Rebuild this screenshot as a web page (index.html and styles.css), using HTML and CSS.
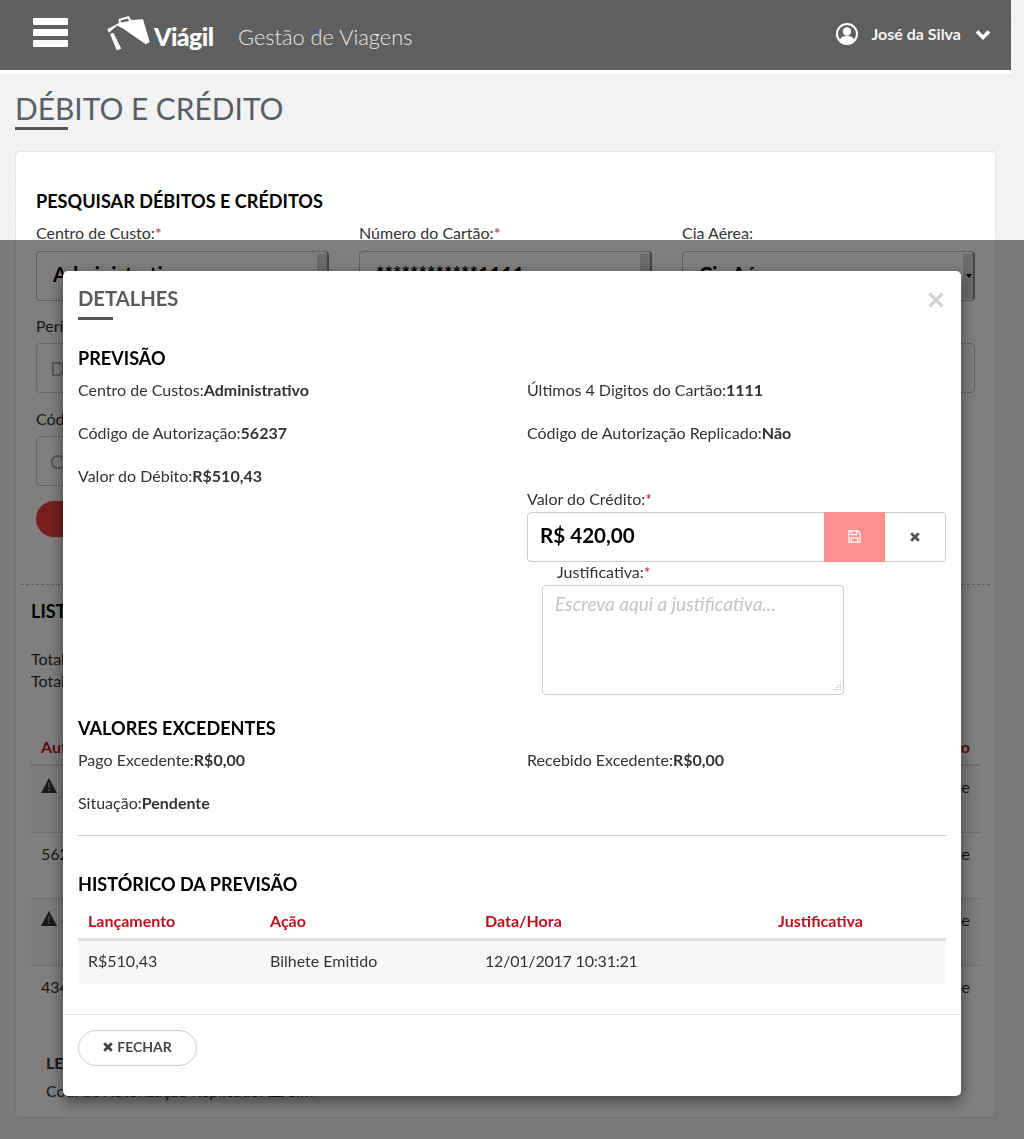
FILE: index.html
```html
<!DOCTYPE html>
<html lang="pt-BR">
<head>
<meta charset="utf-8">
<title>Débito e Crédito</title>
<link rel="stylesheet" href="styles.css">
</head>
<body>
<header class="topbar">
  <div class="burger"><span></span><span></span><span></span></div>
  <div class="logo">
    <svg class="logo-mark" viewBox="0 0 44 36" width="44" height="36"><path fill="#fff" fill-rule="evenodd" d="M.3 13.300 12 7 11.500 3 22 0 24 4 36 3.300 42.700 26 38.700 28.300 16.300 12.700 10 9.500 2 16.700ZM13.500 4.500 14 6.500 22 5 21 2.500Z"/><path fill="#fff" d="M3 18 6.300 16.700 14.300 32.700 9.700 34.300Z"/></svg>
    <span class="logo-word">Viágil</span>
  </div>
  <span class="app-name">Gestão de Viagens</span>
  <div class="user">
    <svg class="user-icon" viewBox="0 0 22 22" width="22" height="22"><circle cx="11" cy="11" r="10" fill="none" stroke="#fff" stroke-width="2"/><circle cx="11" cy="8.500" r="4.200" fill="#fff"/><path fill="#fff" d="M3.500 17.500C5 13.500 8 13 11 13s6 .5 7.500 4.500C16.500 20 14 21 11 21s-5.500-1-7.500-3.500Z"/></svg>
    <span class="user-name">José da Silva</span>
    <svg class="chev" viewBox="0 0 16 11" width="16" height="11"><path fill="none" stroke="#fff" stroke-width="3.600" d="M2 2.500 8 8.500 14 2.500"/></svg>
  </div>
</header>

<main class="page">
  <h1 class="page-title">DÉBITO E CRÉDITO</h1>
  <section class="card">
    <h2 class="sec search-title">PESQUISAR DÉBITOS E CRÉDITOS</h2>
    <div class="form-row">
      <div class="field"><label>Centro de Custo:<em>*</em></label><div class="fake-select"><b>Administrativo</b><i class="bar"></i></div></div>
      <div class="field"><label>Número do Cartão:<em>*</em></label><div class="fake-select"><b>************1111</b><i class="bar"></i></div></div>
      <div class="field"><label>Cia Aérea:</label><div class="fake-select"><b>Cia Aérea</b><i class="bar caret"></i></div></div>
    </div>
    <div class="period">
      <label>Período:</label>
      <div class="fake-input">Data</div>
    </div>
    <div class="code">
      <label>Código de Autorização:</label>
      <div class="fake-input short">Código</div>
    </div>
    <button class="search-btn" type="button">Pesquisar</button>
    <div class="dash"></div>
    <h2 class="sec list-title">LISTA DE PREVISÕES</h2>
    <p class="total first">Total de Débitos: R$0,00</p>
    <p class="total">Total de Créditos: R$0,00</p>
    <div class="list">
      <div class="list-head"><span>Autorização</span><span>Situação</span></div>
      <div class="list-row odd"><svg class="warn" viewBox="0 0 16 15" width="16" height="15"><path fill="#333" d="M8 0 16 15H0Z"/><path fill="#808080" d="M7 5h2v5H7ZM7 11h2v2H7Z"/></svg><span>Pendente</span></div>
      <div class="list-row"><span>56237</span><span>Pendente</span></div>
      <div class="list-row odd"><svg class="warn" viewBox="0 0 16 15" width="16" height="15"><path fill="#333" d="M8 0 16 15H0Z"/><path fill="#808080" d="M7 5h2v5H7ZM7 11h2v2H7Z"/></svg><span>Pendente</span></div>
      <div class="list-row"><span>43412</span><span>Pendente</span></div>
    </div>
    <div class="legend">
      <strong>LEGENDA</strong>
      <p>Cod. de Autorização Replicado: <i class="swatch"></i> Sim</p>
    </div>
  </section>
</main>

<div class="overlay">
  <div class="modal">
    <div class="modal-body">
      <div class="modal-head">
        <h3 class="modal-title">DETALHES</h3>
        <svg class="modal-close" viewBox="0 0 16 16" width="16" height="16"><path fill="none" stroke="#d2d2d2" stroke-width="3.400" d="M1.500 1.500 14.500 14.500M14.500 1.500 1.500 14.500"/></svg>
      </div>
      <h2 class="sec prev-title">PREVISÃO</h2>
      <div class="cols">
        <div class="col">
          <p class="data">Centro de Custos:<b>Administrativo</b></p>
          <p class="data">Código de Autorização:<b>56237</b></p>
          <p class="data">Valor do Débito:<b>R$510,43</b></p>
        </div>
        <div class="col">
          <p class="data">Últimos 4 Digitos do Cartão:<b>1111</b></p>
          <p class="data">Código de Autorização Replicado:<b>Não</b></p>
          <label class="credit-label">Valor do Crédito:<em>*</em></label>
          <div class="credit">
            <span class="credit-value">R$ 420,00</span>
            <span class="btn-save"><svg viewBox="0 0 14 14" width="13" height="13"><path fill="none" stroke="#fff" stroke-width="1.300" d="M1 1H10.500L13 3.500V13H1Z"/><path fill="none" stroke="#fff" stroke-width="1.300" d="M3.500 1V5H9.500V1M3.500 13V8.500H10.500V13"/></svg></span>
            <span class="btn-cancel"><svg class="x" viewBox="0 0 10 10" width="10" height="10"><path fill="none" stroke="#555" stroke-width="2.800" d="M1.200 1.200 8.800 8.800M8.800 1.200 1.200 8.800"/></svg></span>
          </div>
          <label class="just-label">Justificativa:<em>*</em></label>
          <div class="textarea">Escreva aqui a justificativa...<svg class="grip" viewBox="0 0 10 10" width="10" height="10"><path fill="#bbb" d="M8 0h1v1H8ZM6 2h1v1H6ZM8 2h1v1H8ZM4 4h1v1H4ZM6 4h1v1H6ZM8 4h1v1H8ZM2 6h1v1H2ZM4 6h1v1H4ZM6 6h1v1H6ZM8 6h1v1H8Z"/></svg></div>
        </div>
      </div>
      <h2 class="sec exc-title">VALORES EXCEDENTES</h2>
      <div class="cols">
        <div class="col">
          <p class="data">Pago Excedente:<b>R$0,00</b></p>
          <p class="data">Situação:<b>Pendente</b></p>
        </div>
        <div class="col">
          <p class="data">Recebido Excedente:<b>R$0,00</b></p>
        </div>
      </div>
      <hr class="rule">
      <h2 class="sec hist-title">HISTÓRICO DA PREVISÃO</h2>
      <div class="hist hist-head"><span>Lançamento</span><span>Ação</span><span>Data/Hora</span><span>Justificativa</span></div>
      <div class="hist hist-row"><span>R$510,43</span><span>Bilhete Emitido</span><span class="when">12/01/2017 10:31:21</span><span></span></div>
    </div>
    <div class="modal-foot">
      <button class="close-btn" type="button"><svg viewBox="0 0 10 10" width="10" height="10"><path fill="none" stroke="#444" stroke-width="2.800" d="M1.200 1.200 8.800 8.800M8.800 1.200 1.200 8.800"/></svg>FECHAR</button>
    </div>
  </div>
</div>
</body>
</html>
```
FILE: styles.css
```css
* { box-sizing: border-box; }
html, body { margin: 0; padding: 0; }
body {
  height: 1139px;
  overflow: hidden;
  font: 16px/20px Lato, "Liberation Sans", sans-serif;
  color: #333;
  background: repeating-linear-gradient(100deg, #f6f6f6 0 1px, #eeeeee 1px 2px);
}
p, h1, h2, h3 { margin: 0; }
em { font-style: normal; color: #c2102a; }

.topbar {
  width: 1011px;
  height: 74px;
  border-bottom: 4px solid #fff;
  background: #5f5f60;
  display: flex;
  align-items: flex-start;
  color: #fff;
}
.burger { width: 35px; margin: 18px 0 0 33px; display: flex; flex-direction: column; gap: 4px; }
.burger span { height: 7px; background: #fff; border-radius: 1px; }
.logo { display: flex; align-items: flex-start; margin-left: 39px; width: 131px; }
.logo-mark { margin-top: 16px; flex: none; }
.logo-word { font-size: 25px; line-height: 30px; font-weight: 900; margin: 21px 0 0 3px; letter-spacing: -0.6px; }
.app-name { font-size: 21.800px; line-height: 26px; font-weight: 300; color: #e6e6e6; margin: 24px 0 0; }
.user { margin-left: auto; display: flex; align-items: center; height: 22px; margin-top: 23px; padding-right: 20px; }
.user-name { font-size: 16px; font-weight: 700; margin: 0 14px 0 13px; color: #f4f4f4; }

.page { padding: 0 15px; }
.page-title {
  font-size: 29.900px; line-height: 38px; font-weight: 400; color: #5a5f66;
  padding: 15px 0 0; height: 55px; position: relative;
}
.page-title::after { content: ""; display: block; width: 53px; height: 3px; background: #555; margin: 0; }
.card {
  margin-top: 22px;
  width: 981px;
  height: 967px;
  background: #fff;
  border: 1px solid #e4e4e4;
  border-radius: 4px;
  padding: 0 20px;
}
.sec { font-size: 18.100px; line-height: 24px; font-weight: 700; color: #000; }
.search-title { padding-top: 37px; height: 70px; }
label { display: block; }
.form-row { display: grid; grid-template-columns: repeat(3, 293px); gap: 30px; margin-top: 1px; }
.form-row label { height: 21px; line-height: 20px; }
.fake-select {
  height: 50px; margin-top: 7px; border: 1px solid #bbb; border-radius: 4px;
  padding: 10px 16px; font-size: 20px; line-height: 24px; color: #000; position: relative; border-right: 2px solid #888;
}
.fake-select .bar { position: absolute; top: 2px; right: 0; width: 10px; height: 45px; background: #d6d6d6; }
.fake-select .caret::after {
  content: ""; position: absolute; left: 3px; top: 20px;
  border: 3px solid transparent; border-top: 4px solid #000; border-bottom: 0;
}
.period { margin-top: 15px; }
.period label, .code label { line-height: 20px; }
.fake-input { height: 50px; margin-top: 7px; border: 1px solid #ccc; border-radius: 4px; padding: 14px 13px; color: #aaa; font-size: 20px; width: 939px; }
.fake-input.short { width: 293px; }
.code { margin-top: 16px; }
.search-btn { display: block; margin-top: 15px; width: 130px; height: 36px; border: 0; border-radius: 18px; background: #f03c3c; color: #fff; font: 700 14px Lato, sans-serif; }
.dash { border-top: 1px dashed #bbb; margin: 47px -15px 0; }
.list-title { margin: 14px 0 0 -5px; }
.total { margin-left: -5px; line-height: 22px; }
.total.first { margin-top: 25px; }
.list { margin: 38px 0 0 -5px; width: 949px; }
.list-head { display: flex; justify-content: space-between; height: 36px; padding: 7px 10px 0; font-weight: 700; color: #c2102a; border-bottom: 2px solid #ddd; }
.list-row { display: flex; justify-content: space-between; align-items: flex-start; height: 66.500px; padding: 11px 10px; border-bottom: 1px solid #ddd; }
.list-row:last-child { border-bottom: 0; }
.list-row.odd { background: #f8f8f8; }
.warn { margin-top: 1px; }
.legend { margin: 21px 0 0 10px; }
.legend strong { display: block; }
.legend p { margin-top: 8px; }
.swatch { display: inline-block; width: 16px; height: 10px; background: #333; }

.overlay { position: fixed; top: 240px; left: 0; right: 0; bottom: 0; background: rgba(0, 0, 0, .5); }
.modal {
  margin: 31px 0 0 63px; width: 898px; height: 825px; background: #fff; border-radius: 5px;
  box-shadow: 0 5px 15px rgba(0, 0, 0, .5);
}
.modal-body { padding: 0 15px; height: 744px; border-bottom: 1px solid #e5e5e5; }
.modal-head { display: flex; justify-content: space-between; height: 49px; position: relative; padding-top: 14px; }
.modal-title { font-size: 20.200px; line-height: 26px; font-weight: 700; color: #5b5b5b; position: relative; }
.modal-title::after { content: ""; display: block; width: 35px; height: 3px; background: #555; margin-top: 6px; }
.modal-close { margin: 7px 2px 0 0; }
.prev-title { margin-top: 26px; }
.cols { display: grid; grid-template-columns: 449px 419px; }
.data { height: 43px; line-height: 20px; padding-top: 10px; }
.data b { font-weight: 700; }
.col { min-width: 0; }
.credit-label { margin-top: 33px; }
.credit { display: flex; margin-top: 3px; height: 50px; border: 1px solid #ccc; border-radius: 4px; }
.credit-value { flex: 1; font-size: 20.600px; line-height: 44px; font-weight: 700; color: #000; padding-left: 12px; }
.btn-save { width: 61px; margin: -1px 0; padding-bottom: 2px; background: #ff8f8f; display: flex; align-items: center; justify-content: center; }
.btn-cancel { width: 60px; display: flex; align-items: center; justify-content: center; }
.just-label { margin: 0 0 0 30px; }
.textarea {
  margin: 3px 0 0 15px; width: 302px; height: 110px; border: 1px solid #ccc; border-radius: 4px;
  padding: 6px 12px; font-size: 19px; line-height: 24px; font-style: italic; color: #c4c4c4; font-weight: 400; position: relative;
}
.grip { position: absolute; right: 1px; bottom: 1px; }
.exc-title { margin-top: 21px; }
.rule { margin: 9px 0 0; border: 0; border-top: 1px solid #ccc; height: 0; }
.hist-title { margin-top: 36px; }
.hist { display: grid; grid-template-columns: 182px 215px 293px 178px; padding-left: 10px; }
.hist-head { height: 38px; margin-top: 7px; padding-top: 8px; font-weight: 700; color: #b8121f; border-bottom: 3px solid #ddd; }
.hist-row { height: 43px; line-height: 39px; background: #f8f8f8; }
.when { letter-spacing: -0.2px; }
.modal-foot { padding: 15px 15px 0; }
.close-btn {
  width: 119px; height: 36px; background: #fff; border: 1px solid #ccc; border-radius: 18px;
  font: 700 14px/20px Lato, sans-serif; color: #444; display: flex; align-items: center; justify-content: center; gap: 4px; padding: 0 0 2px;
}
```
